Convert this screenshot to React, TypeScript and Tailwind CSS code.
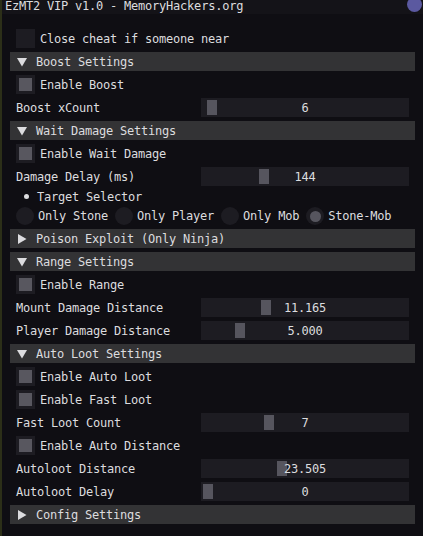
import React from "react";

const font = { fontFamily: '"DejaVu Sans Mono", "Liberation Mono", monospace' };

function Checkbox({ label, filled = true }: { label: string; filled?: boolean }) {
  return (
    <div className="flex h-[19px] items-center">
      <div className="flex h-[19px] w-[19px] items-center justify-center bg-[#1d1c22]">
        {filled && <div className="h-[13px] w-[13px] bg-[#58575f]" />}
      </div>
      <span className="ml-[5px] leading-none">{label}</span>
    </div>
  );
}

function Header({ label, open }: { label: string; open: boolean }) {
  return (
    <div className="-ml-[6px] flex h-[19px] w-[405px] items-center bg-[#333335]">
      <svg width="10" height="10" viewBox="0 0 10 10" className="ml-[7px]">
        {open ? (
          <polygon points="0,1 10,1 5,9.5" fill="#dcdcdf" />
        ) : (
          <polygon points="1,0 9.5,5 1,10" fill="#dcdcdf" />
        )}
      </svg>
      <span className="ml-[9px] leading-none">{label}</span>
    </div>
  );
}

function Slider({ label, value, grab }: { label: string; value: string; grab: number }) {
  return (
    <div className="flex h-[19px] items-center">
      <span className="w-[185px] leading-none">{label}</span>
      <div className="relative flex h-[19px] w-[208px] items-center justify-center bg-[#1d1c22]">
        <div
          className="absolute top-[2px] h-[15px] w-[10px] bg-[#56555e]"
          style={{ left: grab }}
        />
        <span className="relative leading-none">{value}</span>
      </div>
    </div>
  );
}

function Radio({ label, selected = false }: { label: string; selected?: boolean }) {
  return (
    <div className="flex items-center">
      <div className="flex h-[18px] w-[18px] items-center justify-center rounded-full bg-[#1d1c22]">
        {selected && <div className="h-[11px] w-[11px] rounded-full bg-[#56555e]" />}
      </div>
      <span className="ml-[4px] leading-none">{label}</span>
    </div>
  );
}

export default function App() {
  return (
    <div
      className="relative h-[536px] w-[423px] overflow-hidden bg-[#0f0e13] text-[12px] tracking-[-0.22px] text-[#dcdcdf]"
      style={font}
    >
      <div className="absolute left-0 top-0 h-full w-[2px] bg-[#2c2f18]" />
      <div className="flex h-[14px] items-center bg-[#141318] pl-[5px]">
        <span className="-mt-[3px] leading-none">EzMT2 VIP v1.0 - MemoryHackers.org</span>
      </div>
      <div className="absolute right-[1px] top-[-3px] h-[15px] w-[15px] rounded-full bg-[#5b59a0]" />
      <div className="flex flex-col gap-[4px] pl-[16px] pt-[15px]">
        <Checkbox label="Close cheat if someone near" filled={false} />
        <Header label="Boost Settings" open />
        <Checkbox label="Enable Boost" />
        <Slider label="Boost xCount" value="6" grab={6} />
        <Header label="Wait Damage Settings" open />
        <Checkbox label="Enable Wait Damage" />
        <Slider label="Damage Delay (ms)" value="144" grab={58} />
        <div className="flex h-[13px] items-center">
          <div className="ml-[8px] h-[5px] w-[5px] rounded-full bg-[#dcdcdf]" />
          <span className="ml-[8px] leading-none">Target Selector</span>
        </div>
        <div className="flex h-[18px] items-center gap-[7px]">
          <Radio label="Only Stone" />
          <Radio label="Only Player" />
          <Radio label="Only Mob" />
          <Radio label="Stone-Mob" selected />
        </div>
        <Header label="Poison Exploit (Only Ninja)" open={false} />
        <Header label="Range Settings" open />
        <Checkbox label="Enable Range" />
        <Slider label="Mount Damage Distance" value="11.165" grab={60} />
        <Slider label="Player Damage Distance" value="5.000" grab={34} />
        <Header label="Auto Loot Settings" open />
        <Checkbox label="Enable Auto Loot" />
        <Checkbox label="Enable Fast Loot" />
        <Slider label="Fast Loot Count" value="7" grab={63} />
        <Checkbox label="Enable Auto Distance" />
        <Slider label="Autoloot Distance" value="23.505" grab={76} />
        <Slider label="Autoloot Delay" value="0" grab={2} />
        <Header label="Config Settings" open={false} />
      </div>
    </div>
  );
}
